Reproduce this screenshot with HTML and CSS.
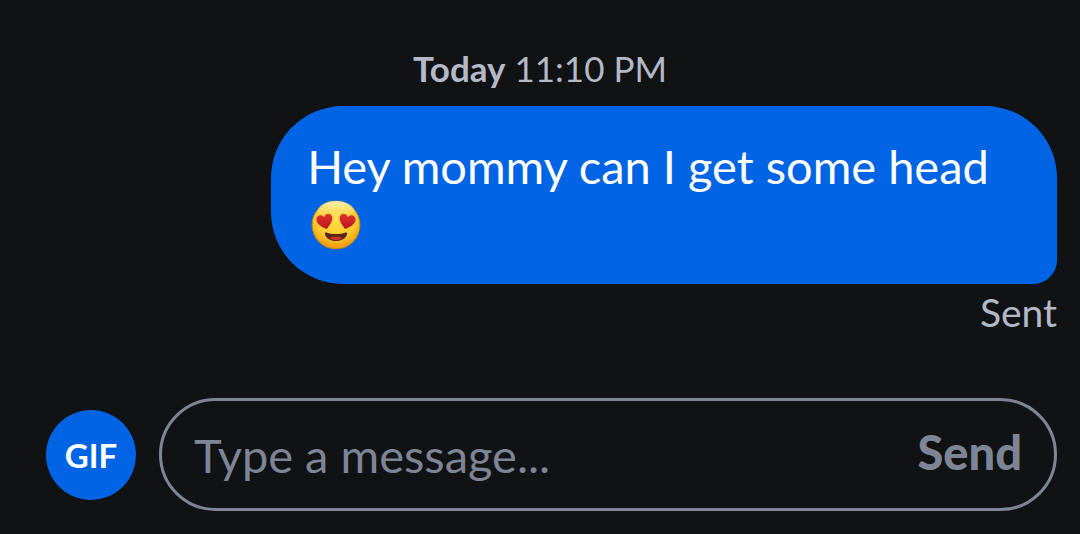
FILE: index.html
```html
<!DOCTYPE html>
<html lang="en">
<head>
    <meta charset="UTF-8">
    <meta name="viewport" content="width=device-width, initial-scale=1.0">
    <title>Messages</title>
    <link rel="stylesheet" href="styles.css">
</head>
<body>
    <main class="chat">
        <div class="timestamp"><strong>Today</strong> 11:10 PM</div>

        <div class="message">
            <p class="bubble">Hey mommy can I get some head
                <svg class="emoji" viewBox="0 0 50 50" role="img" aria-label="Smiling face with heart-eyes">
                    <defs>
                        <radialGradient id="face" cx="50%" cy="34%" r="66%">
                            <stop offset="0" stop-color="#ffe04a"/>
                            <stop offset="0.65" stop-color="#fdcb2c"/>
                            <stop offset="1" stop-color="#ef920c"/>
                        </radialGradient>
                        <linearGradient id="shine" x1="0" y1="0" x2="0" y2="1">
                            <stop offset="0" stop-color="#fff8d8" stop-opacity="0.8"/>
                            <stop offset="1" stop-color="#ffe25a" stop-opacity="0"/>
                        </linearGradient>
                        <linearGradient id="heart" x1="0" y1="0" x2="0" y2="1">
                            <stop offset="0" stop-color="#e5352f"/>
                            <stop offset="1" stop-color="#b81420"/>
                        </linearGradient>
                    </defs>
                    <circle cx="25" cy="25" r="24" fill="url(#face)" stroke="#b88225" stroke-width="0.8"/>
                    <ellipse cx="25" cy="11" rx="18" ry="10" fill="url(#shine)"/>
                    <path fill="url(#heart)" d="M16 29C11 27 6 24.500 5.500 20C5 16 10 13.500 13 17C14.500 12.500 20.500 12.500 21.300 17C22 21.500 18.500 25 16 29Z"/>
                    <path fill="url(#heart)" d="M34 29C39 27 44 24.500 44.500 20C45 16 40 13.500 37 17C35.500 12.500 29.500 12.500 28.700 17C28 21.500 31.500 25 34 29Z"/>
                    <path fill="#5e2418" d="M15.500 32.500C21 34.500 29 34.500 34.500 32.500C36 32.200 36.500 33 36 34.500C34.500 38.800 30.500 41 25 41C19.500 41 15.500 38.800 14 34.500C13.500 33 14 32.200 15.500 32.500Z"/>
                    <path fill="#c9362b" d="M18.500 38.200C22 36.300 28 36.300 31.500 38.200C28.500 40.600 21.500 40.600 18.500 38.200Z"/>
                </svg>
            </p>
            <span class="status">Sent</span>
        </div>

        <form class="composer">
            <button class="gif-button" type="button">GIF</button>
            <div class="message-box">
                <input class="message-input" type="text" placeholder="Type a message..." aria-label="Message">
                <button class="send-button" type="submit">Send</button>
            </div>
        </form>
    </main>
</body>
</html>
```
FILE: styles.css
```css
:root {
    --background: #101214;
    --accent: #0064e5;
    --muted: #b4b9c7;
    --outline: #7e8596;
}

* {
    box-sizing: border-box;
    margin: 0;
    padding: 0;
}

body {
    background-color: var(--background);
    color: white;
    font-family: Lato, "Liberation Sans", sans-serif;
}

button, input {
    border: none;
    background: none;
    font-family: inherit;
}

.chat {
    display: flex;
    flex-direction: column;
    padding: 46px 23px 23px;
}

.timestamp {
    color: var(--muted);
    font-size: 35px;
    line-height: 44px;
    text-align: center;
}

.message {
    display: flex;
    flex-direction: column;
    align-items: flex-end;
    margin-top: 16px;
}

.bubble {
    max-width: 76%;
    padding: 32px 36px 34px;
    border-radius: 72px 72px 24px 72px;
    background-color: var(--accent);
    font-size: 47px;
    line-height: 56px;
}

.emoji {
    display: inline-block;
    width: 50px;
    height: 50px;
    margin-left: 4px;
    vertical-align: -10px;
}

.status {
    margin-top: 6px;
    color: var(--muted);
    font-size: 39px;
    line-height: 44px;
}

.composer {
    display: flex;
    align-items: center;
    gap: 23px;
    margin-top: 64px;
    padding-left: 23px;
}

.gif-button {
    flex: none;
    width: 90px;
    height: 90px;
    border-radius: 50%;
    background-color: var(--accent);
    color: white;
    font-size: 33px;
    font-weight: 700;
    cursor: pointer;
}

.message-box {
    flex: 1;
    display: flex;
    align-items: center;
    min-width: 0;
    padding: 25px 32px;
    border: 3px solid var(--outline);
    border-radius: 57px;
}

.message-input {
    flex: 1;
    min-width: 0;
    height: 57px;
    color: white;
    font-size: 47px;
    outline: none;
}

.message-input::placeholder {
    color: var(--outline);
    opacity: 1;
}

.send-button {
    padding-bottom: 6px;
    color: var(--outline);
    font-size: 47px;
    font-weight: 900;
    line-height: 50px;
    cursor: pointer;
}
```
